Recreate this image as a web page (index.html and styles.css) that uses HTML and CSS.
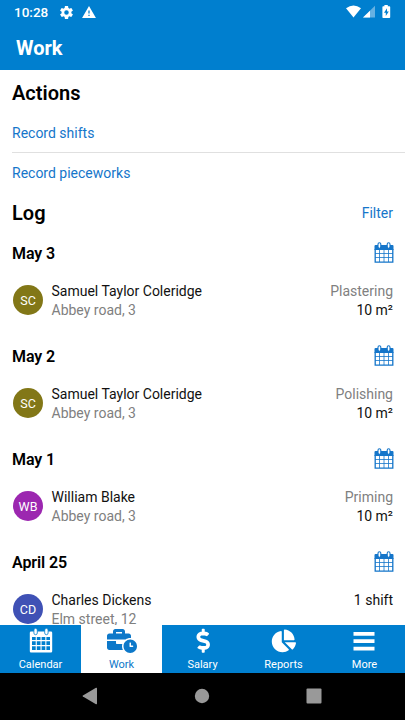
FILE: index.html
```
<!DOCTYPE html>
<html lang="en">
<head>
<meta charset="utf-8">
<title>Work</title>
<link rel="stylesheet" href="styles.css">
</head>
<body>
<svg class="defs" width="0" height="0">
  <symbol id="cal" viewBox="0 0 20 22">
    <path fill="none" stroke="currentColor" stroke-width=".8" d="M1 11.500h18M1 15.500h18M5.500 7.500v12.500M10 7.500v12.500M14.500 7.500v12.500"/>
    <path fill="none" stroke="currentColor" stroke-width="1.300" d="M1.200 7v13.200h17.600V7"/>
    <path fill="currentColor" d="M1.500 3h17a1 1 0 0 1 1 1v4H.5V4a1 1 0 0 1 1-1z"/>
    <path fill="#fff" stroke="currentColor" stroke-width="1.1" d="M4 2.2a1.4 1.4 0 0 1 2.8 0v2.6a1.4 1.4 0 0 1-2.8 0zM13.2 2.2a1.4 1.4 0 0 1 2.8 0v2.6a1.4 1.4 0 0 1-2.8 0z"/>
  </symbol>
</svg>
<div class="status">
  <span class="time">10:28</span>
  <svg class="gear" width="13" height="13" viewBox="2 2 20 20"><path fill="#fff" d="M19.43 12.98c.04-.32.07-.64.07-.98s-.03-.66-.07-.98l2.11-1.65c.19-.15.24-.42.12-.64l-2-3.46c-.12-.22-.39-.3-.61-.22l-2.49 1c-.52-.4-1.08-.73-1.69-.98l-.38-2.65A.488.488 0 0 0 14 2h-4c-.25 0-.46.18-.49.42l-.38 2.65c-.61.25-1.17.59-1.69.98l-2.49-1c-.23-.09-.49 0-.61.22l-2 3.46c-.13.22-.07.49.12.64l2.11 1.65c-.04.32-.07.65-.07.98s.03.66.07.98l-2.11 1.65c-.19.15-.24.42-.12.64l2 3.46c.12.22.39.3.61.22l2.49-1c.52.4 1.08.73 1.69.98l.38 2.65c.03.24.24.42.49.42h4c.25 0 .46-.18.49-.42l.38-2.65c.61-.25 1.17-.59 1.69-.98l2.49 1c.23.09.49 0 .61-.22l2-3.46c.12-.22.07-.49-.12-.64l-2.11-1.65zM12 15.500a3.500 3.500 0 1 1 0-7 3.500 3.500 0 0 1 0 7z"/></svg>
  <svg class="warn" width="14" height="12" viewBox="1 2 22 19"><path fill="#fff" d="M1 21h22L12 2 1 21zm12-3h-2v-2h2v2zm0-4h-2v-5h2v5z"/></svg>
  <svg class="signals" width="46" height="14" viewBox="0 0 46 14">
    <path fill="#fff" d="M0 3.2Q7.5-2.2 15 3.2L7.5 12.500z"/>
    <path fill="#66b1e2" d="M17 12.500 29 .8v11.700z"/>
    <path fill="#fff" d="M17 12.500 24 5.700v6.800z"/>
    <path fill="#fff" d="M38.400 0h3.400v1.300h1.600q.8 0 .8.8v10.100q0 .8-.8.8h-6.200q-.8 0-.8-.8V2.100q0-.8.8-.8h1.200z"/>
    <path fill="#007fcf" d="M41 3.200 38 7.700h1.800v3.300l3-4.600H41z"/>
  </svg>
</div>
<header class="bar">Work</header>
<main class="content">
  <h2 class="title actions">Actions</h2>
  <a class="link lined">Record shifts</a>
  <a class="link">Record pieceworks</a>
  <div class="loghead"><h2 class="title">Log</h2><a class="filter">Filter</a></div>

  <section class="day">
    <div class="date"><h3>May 3</h3><svg class="cal" width="20" height="22"><use href="#cal"/></svg></div>
    <div class="entry"><div class="avatar olive">SC</div><div class="who"><p>Samuel Taylor Coleridge</p><p class="muted">Abbey road, 3</p></div><div class="what"><p class="muted">Plastering</p><p>10 m²</p></div></div>
  </section>
  <section class="day">
    <div class="date"><h3>May 2</h3><svg class="cal" width="20" height="22"><use href="#cal"/></svg></div>
    <div class="entry"><div class="avatar olive">SC</div><div class="who"><p>Samuel Taylor Coleridge</p><p class="muted">Abbey road, 3</p></div><div class="what"><p class="muted">Polishing</p><p>10 m²</p></div></div>
  </section>
  <section class="day">
    <div class="date"><h3>May 1</h3><svg class="cal" width="20" height="22"><use href="#cal"/></svg></div>
    <div class="entry"><div class="avatar purple">WB</div><div class="who"><p>William Blake</p><p class="muted">Abbey road, 3</p></div><div class="what"><p class="muted">Priming</p><p>10 m²</p></div></div>
  </section>
  <section class="day">
    <div class="date"><h3>April 25</h3><svg class="cal" width="20" height="22"><use href="#cal"/></svg></div>
    <div class="entry"><div class="avatar indigo">CD</div><div class="who"><p>Charles Dickens</p><p class="muted">Elm street, 12</p></div><div class="what"><p>1 shift</p></div></div>
  </section>
</main>
<nav class="tabs">
  <a class="tab">
    <svg width="24" height="26" viewBox="0 0 24 26"><path fill="#fff" fill-rule="evenodd" d="M2 3.500h20q1.200 0 1.200 1.200v18.600q0 1.200-1.200 1.200H2q-1.200 0-1.200-1.200V4.700q0-1.200 1.200-1.200zM3 9v3h3.700V9zm4.800 0v3h3.700V9zm4.800 0v3h3.700V9zm4.800 0v3H21V9zM3 13.300v3.600h3.700v-3.600zm4.800 0v3.600h3.700v-3.600zm4.800 0v3.600h3.700v-3.600zm4.800 0v3.600H21v-3.600zM3 18.200v3.900h3.700v-3.900zm4.800 0v3.900h3.700v-3.900zm4.800 0v3.900h3.700v-3.900zm4.800 0v3.900H21v-3.900z"/><path fill="#fff" stroke="#007fcf" stroke-width=".8" d="M4.900 2a1.700 1.700 0 0 1 3.400 0v3a1.700 1.700 0 0 1-3.400 0zM15.700 2a1.700 1.700 0 0 1 3.400 0v3a1.700 1.700 0 0 1-3.400 0z"/></svg>
    <span>Calendar</span></a>
  <a class="tab active">
    <svg width="30" height="26" viewBox="0 0 640 554"><path fill="currentColor" d="M496 224c-79.590 0-144 64.410-144 144s64.410 144 144 144 144-64.410 144-144-64.410-144-144-144zm64 150.290c0 5.340-4.370 9.710-9.710 9.710h-60.570c-5.340 0-9.710-4.370-9.710-9.710v-76.570c0-5.340 4.370-9.710 9.710-9.710h12.570c5.340 0 9.710 4.370 9.710 9.710V352h38.290c5.340 0 9.710 4.370 9.710 9.710v12.580zM496 192c5.400 0 10.720.33 16 .81V144c0-25.600-22.400-48-48-48h-80V48c0-25.600-22.400-48-48-48H176c-25.600 0-48 22.400-48 48v48H48c-25.600 0-48 22.400-48 48v80h395.120c28.600-20.090 63.350-32 100.880-32zM320 96H192V64h128v32zm6.820 224H208c-8.840 0-16-7.160-16-16v-48H0v144c0 25.600 22.400 48 48 48h291.430C327.100 423.960 320 396.820 320 368c0-16.660 2.480-32.720 6.820-48z" transform="translate(0 22)"/></svg>
    <span>Work</span></a>
  <a class="tab">
    <svg width="24" height="26" viewBox="0 0 24 26"><path fill="#fff" transform="translate(5.500 .8) scale(.0468)" d="M209.200 233.400l-108-31.600C88.700 198.200 80 186.500 80 173.500c0-16.300 13.200-29.500 29.500-29.500h66.300c12.200 0 24.200 3.700 34.200 10.500 6.100 4.100 14.300 3.100 19.500-2l34.800-34c7.100-6.900 6.100-18.400-1.800-24.500C238 74.800 207.400 64.100 176 64V16c0-8.800-7.200-16-16-16h-32c-8.800 0-16 7.200-16 16v48h-2.500C45.800 64-5.400 118.700.5 183.600c4.200 46.100 39.400 83.600 83.800 96.600l102.500 30c12.500 3.700 21.200 15.300 21.200 28.300 0 16.300-13.200 29.500-29.500 29.500h-66.300C100 368 88 364.300 78 357.500c-6.100-4.100-14.300-3.100-19.500 2l-34.800 34c-7.100 6.900-6.100 18.400 1.800 24.500 24.500 19.200 55.100 29.900 86.500 30v48c0 8.800 7.200 16 16 16h32c8.800 0 16-7.200 16-16v-48.200c46.600-.9 90.300-28.600 105.700-72.700 21.500-61.600-14.600-124.800-72.500-141.700z"/></svg>
    <span>Salary</span></a>
  <a class="tab">
    <svg width="26" height="26" viewBox="0 0 26 26"><path fill="#fff" transform="translate(.8 1.500) scale(.0445)" d="M527.790 288H290.500l158.030 158.030c6.040 6.040 15.980 6.530 22.190.68 38.700-36.460 65.320-85.610 73.130-140.860 1.340-9.460-6.510-17.850-16.060-17.850zm-15.830-64.800C503.720 103.740 408.260 8.280 288.800.04 279.680-.59 272 7.100 272 16.240V240h223.770c9.140 0 16.820-7.680 16.190-16.800zM224 288V50.710c0-9.550-8.390-17.400-17.840-16.060C86.990 51.490-4.100 155.600.14 280.370 4.500 408.510 114.830 513.590 243.030 511.980c50.400-.63 96.970-16.870 135.260-44.030 7.900-5.600 8.420-17.230 1.570-24.080L224 288z"/></svg>
    <span>Reports</span></a>
  <a class="tab">
    <svg width="24" height="26" viewBox="0 0 24 26"><path fill="#fff" d="M.500 4h21v3.700h-21zM.500 11.300h21V15h-21zM.500 18.800h21v3.700h-21z"/></svg>
    <span>More</span></a>
</nav>
<div class="sysnav">
  <svg width="16" height="18" viewBox="0 0 16 18"><path fill="#999" d="M14 .8q1-.5 1 .6v15.200q0 1.100-1 .6L.9 9.600q-.8-.6 0-1.200z"/></svg>
  <svg width="16" height="18" viewBox="0 0 16 18"><circle cx="8" cy="9" r="7.200" fill="#999"/></svg>
  <svg width="16" height="18" viewBox="0 0 16 18"><rect x=".5" y="1.500" width="15" height="15" rx="1" fill="#999"/></svg>
</div>
</body>
</html>
```
FILE: styles.css
```
* { box-sizing: border-box; margin: 0; padding: 0; }
body {
  width: 405px; height: 720px; overflow: hidden;
  display: flex; flex-direction: column;
  font-family: Roboto, sans-serif; font-size: 14px; color: #111; background: #fff;
}
.defs { display: none; }
.status { height: 24px; flex: none; background: #007fcf; display: flex; align-items: center; padding: 0 13px 0 14px; color: #fff; }
.time { font-size: 13.5px; font-weight: 500; width: 46px; }
.warn { margin-left: 9px; }
.signals { margin-left: auto; }
.bar { height: 46px; flex: none; background: #007fcf; color: #fff; font-size: 20px; font-weight: 700; line-height: 48px; padding-left: 16px; }
.content { flex: 1; min-height: 0; overflow: hidden; padding-left: 12px; }
.title { font-size: 20px; font-weight: 600; color: #000; }
.actions { line-height: 46px; height: 43px; }
.link { display: block; height: 40px; line-height: 40px; color: #1576ca; }
.lined { border-bottom: 1px solid #e0e0e0; }
.loghead { display: flex; justify-content: space-between; align-items: center; height: 40px; padding-right: 12px; }
.filter { color: #1576ca; }
.day { height: 103px; padding-right: 12px; }
.date { height: 40px; display: flex; justify-content: space-between; align-items: center; }
.date h3 { font-size: 16px; font-weight: 600; color: #000; letter-spacing: -.1px; }
.cal { color: #1576ca; margin-right: -1px; }
.entry { display: flex; padding-top: 9px; line-height: 19px; }
.avatar { width: 30px; height: 30px; border-radius: 50%; margin: 3px 8.5px 0 1px; color: #fff; font-size: 12.5px; line-height: 31px; text-align: center; }
.olive { background: #827717; }
.purple { background: #9c27b0; }
.indigo { background: #3f51b5; }
.what { margin-left: auto; text-align: right; }
.muted { color: #808080; }
.tabs { height: 48px; flex: none; display: grid; grid-template-columns: repeat(5, 1fr); }
.tab { background: #007fcf; color: #fff; display: flex; flex-direction: column; align-items: center; padding-top: 3px; font-size: 11px; font-weight: 450; line-height: 22px; }
.active { background: #fff; color: #0d78c9; }
.tab svg { flex: none; }
.sysnav { height: 47px; flex: none; background: #000; display: flex; justify-content: center; align-items: center; gap: 96px; padding: 0 2px 1px 0; }
```
